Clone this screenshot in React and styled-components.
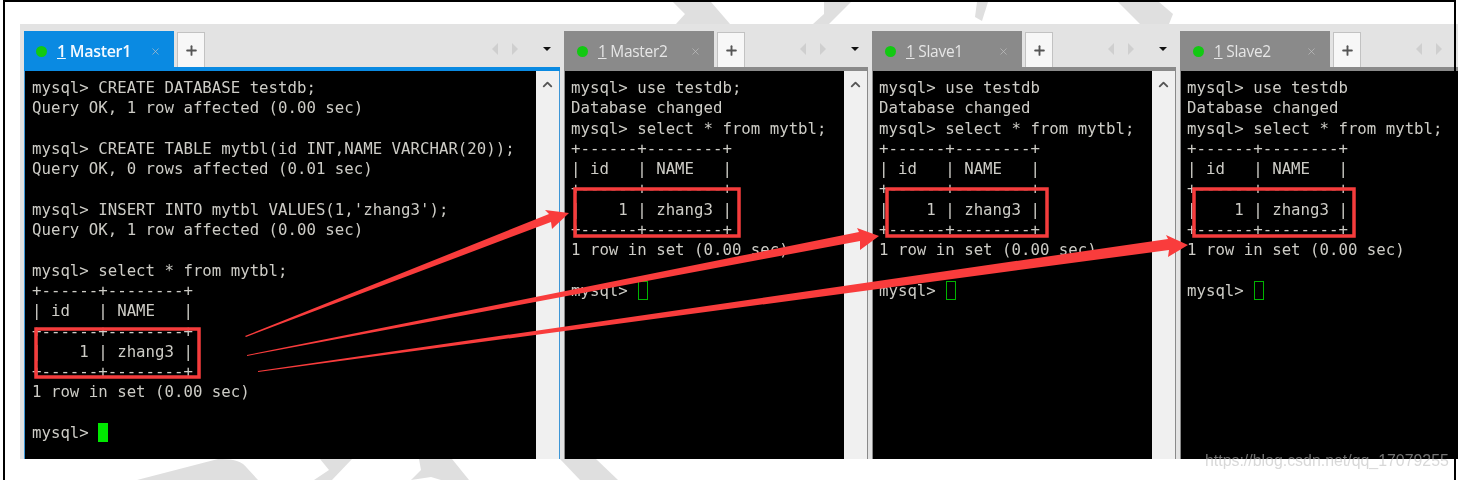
import React from 'react';
import styled, { createGlobalStyle } from 'styled-components';
import { ChevronUp, Plus, X } from 'lucide-react';

const masterLines = [
  'mysql> CREATE DATABASE testdb;',
  'Query OK, 1 row affected (0.00 sec)',
  '',
  'mysql> CREATE TABLE mytbl(id INT,NAME VARCHAR(20));',
  'Query OK, 0 rows affected (0.01 sec)',
  '',
  "mysql> INSERT INTO mytbl VALUES(1,'zhang3');",
  'Query OK, 1 row affected (0.00 sec)',
  '',
  'mysql> select * from mytbl;',
  '+------+--------+',
  '| id   | NAME   |',
  '+------+--------+',
  '|    1 | zhang3 |',
  '+------+--------+',
  '1 row in set (0.00 sec)',
  '',
];

const slaveLines = (useLine) => [
  useLine,
  'Database changed',
  'mysql> select * from mytbl;',
  '+------+--------+',
  '| id   | NAME   |',
  '+------+--------+',
  '|    1 | zhang3 |',
  '+------+--------+',
  '1 row in set (0.00 sec)',
  '',
];

const panels = [
  { name: 'Master1', active: true, lines: masterLines },
  { name: 'Master2', lines: slaveLines('mysql> use testdb;') },
  { name: 'Slave1', lines: slaveLines('mysql> use testdb') },
  { name: 'Slave2', lines: slaveLines('mysql> use testdb') },
];

const Panel = ({ name, active, lines }) => (
  <PanelBox $active={active}>
    <TabBar $active={active}>
      <Tab $active={active}>
        <StatusDot />
        <TabTitle $active={active}>
          <u>1</u> {name}
        </TabTitle>
        <CloseIcon>
          <X size={11} strokeWidth={1.4} />
        </CloseIcon>
      </Tab>
      <AddButton>
        <Plus size={15} strokeWidth={3} />
      </AddButton>
      <TabControls>
        <ScrollCaret $dir="left" />
        <ScrollCaret $dir="right" />
        <MenuCaret />
      </TabControls>
    </TabBar>
    <PanelBody $active={active}>
      <Terminal $active={active}>
        {lines.join('\n')}
        {'\n'}mysql&gt; <Cursor $active={active} />
      </Terminal>
      <ScrollBar>
        <ChevronUp size={15} strokeWidth={3} />
      </ScrollBar>
    </PanelBody>
  </PanelBox>
);

const Watermark = () => (
  <WatermarkArt viewBox="0 0 1458 480">
    <polygon points="673,2 711,2 730,24 676,24 685,14" />
    <polygon points="824,2 851,2 829,24 813,24 824,14" />
    <polygon points="977,2 988,2 982,21 975,17" />
    <polygon points="1118,2 1159,2 1173,14 1169,24 1140,24" />
    <path d="M137,480 L218,459 Q240,458 247,468 L258,480 Z" />
    <polygon points="320,459 352,459 332,480 314,480 329,470" />
    <polygon points="419,459 452,459 469,480 441,480 431,477 411,480 421,470" />
    <polygon points="560,459 596,459 618,480 580,480" />
  </WatermarkArt>
);

const Annotations = () => (
  <AnnotationArt viewBox="0 0 1458 480">
    <RedBox x="36" y="329" width="163" height="48" />
    <RedBox x="575" y="189" width="164" height="47" />
    <RedBox x="887" y="189" width="160" height="47" />
    <RedBox x="1194" y="189" width="160" height="47" />
    <polygon points="245,336 549,214 545,210 569,213 552,229 551,222 246,337" />
    <polygon points="247,355 859,232 857,228 879,236 860,250 860,241 247,356" />
    <polygon points="258,371 1168,239 1166,235 1188,245 1168,257 1169,250 258,372" />
  </AnnotationArt>
);

const App = () => (
  <Page>
    <GlobalStyle />
    <Watermark />
    <Stage>
      {panels.map((panel) => (
        <Panel key={panel.name} {...panel} />
      ))}
    </Stage>
    <Annotations />
    <FrameEdge />
    <SourceUrl>https://blog.csdn.net/qq_17079255</SourceUrl>
  </Page>
);

const GlobalStyle = createGlobalStyle`
  html, body {
    margin: 0;
    padding: 0;
    background: #fff;
  }
`;

const Page = styled.div`
  position: relative;
  width: 1458px;
  height: 480px;
  padding: 24px 0 21px 20px;
  box-sizing: border-box;
  overflow: hidden;
  background: #fff;
`;

const WatermarkArt = styled.svg`
  position: absolute;
  inset: 0;
  width: 1458px;
  height: 480px;
  fill: #dfdfdf;
`;

const AnnotationArt = styled.svg`
  position: absolute;
  inset: 0;
  width: 1458px;
  height: 480px;
  fill: #f93c3c;
  filter: blur(0.3px);
`;

const RedBox = styled.rect`
  fill: none;
  stroke: #f53c3c;
  stroke-width: 3.5;
`;

const FrameEdge = styled.div`
  position: absolute;
  top: 0;
  left: 3px;
  width: 1453px;
  height: 490px;
  box-sizing: border-box;
  border: 2px solid #000;
`;

const SourceUrl = styled.div`
  position: absolute;
  top: 452px;
  left: 1205px;
  font: 15.9px 'Liberation Sans', Arial, sans-serif;
  line-height: 18px;
  color: rgba(190, 190, 190, 0.6);
  filter: blur(0.4px);
`;

const Stage = styled.div`
  position: relative;
  display: flex;
  gap: 4px;
  height: 100%;
  padding: 7px 0 0 4px;
  box-sizing: border-box;
  overflow: hidden;
  background: #e3e3e3;
  filter: blur(0.4px);
`;

const PanelBox = styled.section`
  display: flex;
  flex: none;
  flex-direction: column;
  width: ${({ $active }) => ($active ? 536 : 304)}px;
`;

const TabBar = styled.div`
  display: flex;
  flex: none;
  height: 40px;
  box-sizing: border-box;
  border-bottom: 4px solid ${({ $active }) => ($active ? '#0a8ae2' : '#8a8a8a')};
`;

const Tab = styled.div`
  display: flex;
  flex: none;
  align-items: center;
  width: 150px;
  height: 40px;
  padding-left: ${({ $active }) => ($active ? 12 : 13)}px;
  box-sizing: border-box;
  background: ${({ $active }) => ($active ? '#0a8ae2' : '#8a8a8a')};
`;

const StatusDot = styled.span`
  flex: none;
  width: 11px;
  height: 11px;
  border-radius: 50%;
  background: #12c912;
`;

const TabTitle = styled.span`
  margin-left: 10px;
  font: ${({ $active }) => ($active ? 600 : 400)} ${({ $active }) => ($active ? 16 : 15.5)}px 'Open Sans', 'Noto Sans', sans-serif;
  letter-spacing: -0.3px;
  white-space: pre;
  color: ${({ $active }) => ($active ? '#f4f9ff' : '#e6e6e6')};
`;

const CloseIcon = styled.span`
  display: flex;
  margin-left: auto;
  margin-right: 13px;
  color: #c4c4c4;
`;

const AddButton = styled.div`
  display: flex;
  flex: none;
  align-items: center;
  justify-content: center;
  width: 28px;
  height: 35px;
  margin: 1px 0 0 3px;
  box-sizing: border-box;
  border: 1px solid #c2c2c2;
  border-bottom: 0;
  background: #f7f7f7;
  color: #555;
`;

const TabControls = styled.div`
  display: flex;
  flex: 1;
  align-items: center;
  justify-content: flex-end;
  height: 36px;
  padding-right: 9px;
`;

const ScrollCaret = styled.span`
  width: 0;
  height: 0;
  margin-right: ${({ $dir }) => ($dir === 'left' ? 14 : 25)}px;
  border-top: 6px solid transparent;
  border-bottom: 6px solid transparent;
  border-${({ $dir }) => $dir}: 0;
  border-${({ $dir }) => ($dir === 'left' ? 'right' : 'left')}: 6px solid #cfcfcf;
`;

const MenuCaret = styled.span`
  width: 0;
  height: 0;
  border-left: 4px solid transparent;
  border-right: 4px solid transparent;
  border-top: 4px solid #111;
`;

const PanelBody = styled.div`
  display: flex;
  flex: 1;
  min-height: 0;
  box-sizing: border-box;
  border-left: 1px solid ${({ $active }) => ($active ? '#3d96d6' : '#8a8a8a')};
  border-right: 1px solid ${({ $active }) => ($active ? '#3d96d6' : '#8a8a8a')};
`;

const Terminal = styled.pre`
  flex: 1;
  margin: 0;
  padding: 7px 0 0 ${({ $active }) => ($active ? 7 : 6)}px;
  overflow: hidden;
  background: #000;
  font: 15.72px 'DejaVu Sans Mono', 'Liberation Mono', monospace;
  line-height: 20.3px;
  color: #cdccc6;
`;

const Cursor = styled.span`
  display: inline-block;
  width: 10px;
  height: 19px;
  margin-left: ${({ $active }) => ($active ? 0 : 1)}px;
  box-sizing: border-box;
  vertical-align: -4px;
  border: 1.5px solid ${({ $active }) => ($active ? '#00e800' : '#00b400')};
  background: ${({ $active }) => ($active ? '#00e800' : 'transparent')};
`;

const ScrollBar = styled.div`
  display: flex;
  flex: none;
  justify-content: center;
  width: 23px;
  padding-top: 6px;
  box-sizing: border-box;
  background: #f0f0f0;
  color: #555;
`;

export default App;
